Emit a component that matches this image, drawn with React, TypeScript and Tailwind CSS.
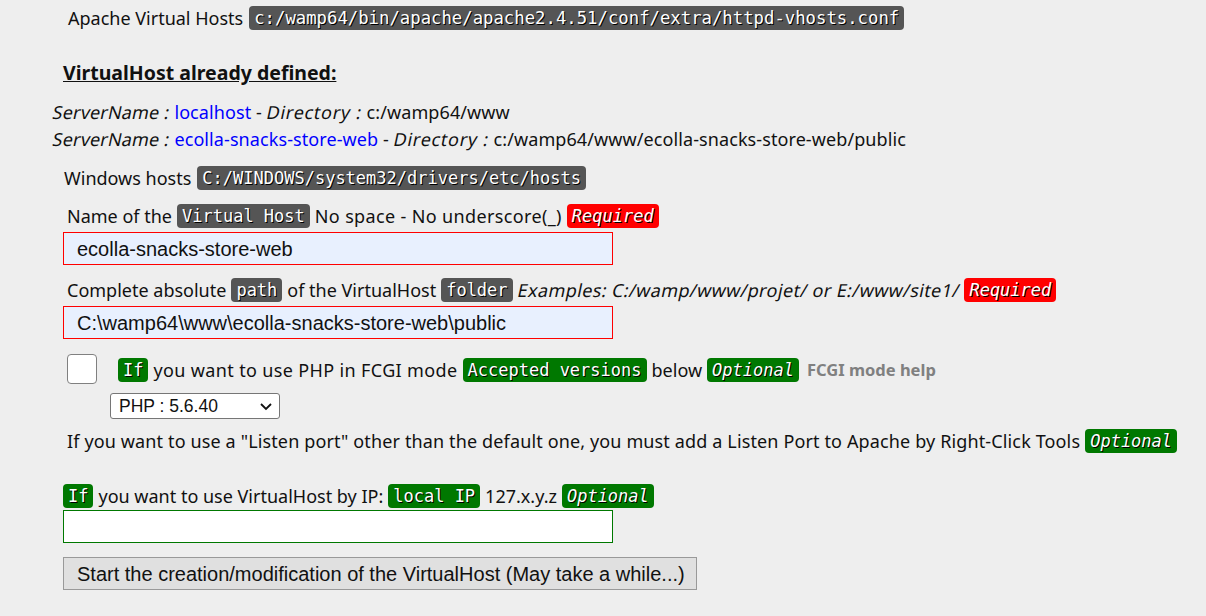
import React from "react";

const mono = '"DejaVu Sans Mono", monospace';

const Badge = ({
  children,
  color,
  italic = false,
  size = 17,
}: {
  children: React.ReactNode;
  color: "dark" | "green" | "red";
  italic?: boolean;
  size?: number;
}) => {
  const bg = color === "dark" ? "bg-[#555555]" : color === "green" ? "bg-[#007800]" : "bg-[#ff0000]";
  return (
    <code
      className={`inline-block rounded-[4px] ${bg} px-[5px] text-white leading-[24px] [text-shadow:1px_1px_0_#000] ${
        italic ? "italic" : ""
      }`}
      style={{ fontFamily: mono, fontSize: `${size}px` }}
    >
      {children}
    </code>
  );
};

const Obl = ({ children, className = "" }: { children: React.ReactNode; className?: string }) => (
  <span className={`inline-block -skew-x-12 ${className}`}>{children}</span>
);

const arial = '"Liberation Sans", Arial, sans-serif';

export default function App() {
  return (
    <div
      className="min-h-[616px] w-full bg-[#eeeeee] text-[#111111]"
      style={{ fontFamily: '"Noto Sans", "DejaVu Sans", sans-serif', fontSize: "18px" }}
    >
      <div className="pl-[68px] pt-[6px] flex items-center gap-[6px] h-[30px]">
        <span>Apache Virtual Hosts</span>
        <Badge color="dark" size={17.3}>
          c:/wamp64/bin/apache/apache2.4.51/conf/extra/httpd-vhosts.conf
        </Badge>
      </div>

      <div className="pl-[63px] mt-[28px] font-bold underline text-[19.5px]">VirtualHost already defined:</div>

      <div className="pl-[53px] mt-[12px] leading-[27px] tracking-[0.005em]">
        <div>
          <Obl className="tracking-[0.01em]">ServerName :</Obl> <span className="text-[#0000ff]">localhost</span> -{" "}
          <Obl className="tracking-[0.04em]">Directory :</Obl> c:/wamp64/www
        </div>
        <div>
          <Obl className="tracking-[0.01em]">ServerName :</Obl>{" "}
          <span className="text-[#0000ff]">ecolla-snacks-store-web</span> -{" "}
          <Obl className="tracking-[0.04em]">Directory :</Obl> c:/wamp64/www/ecolla-snacks-store-web/public
        </div>
      </div>

      <div className="pl-[64px] mt-[12px] flex items-center gap-[6px] h-[26px]">
        <span>Windows hosts</span>
        <Badge color="dark">C:/WINDOWS/system32/drivers/etc/hosts</Badge>
      </div>

      <div className="pl-[67px] mt-[12px] flex items-center gap-[5px] h-[26px]">
        <span>Name of the</span>
        <Badge color="dark">Virtual Host</Badge>
        <span className="tracking-[0.02em]">No space - No underscore(_)</span>
        <Badge color="red" italic>
          Required
        </Badge>
      </div>
      <div className="pl-[63px] mt-[3px]">
        <div
          className="w-[550px] h-[33px] border border-[#ff0000] bg-[#e8f0fe] flex items-center pl-[13px]"
          style={{ fontFamily: arial, fontSize: "20px" }}
        >
          ecolla-snacks-store-web
        </div>
      </div>

      <div className="pl-[67px] mt-[12px] flex items-center gap-[5px] h-[26px]">
        <span>Complete absolute</span>
        <Badge color="dark">path</Badge>
        <span>of the VirtualHost</span>
        <Badge color="dark">folder</Badge>
        <Obl className="tracking-[0.022em]">Examples: C:/wamp/www/projet/ or E:/www/site1/</Obl>
        <Badge color="red" italic>
          Required
        </Badge>
      </div>
      <div className="pl-[63px] mt-[3px]">
        <div
          className="w-[550px] h-[33px] border border-[#ff0000] bg-[#e8f0fe] flex items-center pl-[13px]"
          style={{ fontFamily: arial, fontSize: "20px" }}
        >
          C:\wamp64\www\ecolla-snacks-store-web\public
        </div>
      </div>

      <div className="pl-[67px] mt-[15px] flex items-start">
        <div className="w-[30px] h-[30px] rounded-[4px] border border-[#808080] bg-white shrink-0" />
        <div className="ml-[21px] flex items-center gap-[5px] h-[26px] mt-[3px]">
          <Badge color="green">If</Badge>
          <span className="tracking-[0.02em]">you want to use PHP in FCGI mode</span>
          <Badge color="green">Accepted versions</Badge>
          <span>below</span>
          <Badge color="green" italic>
            Optional
          </Badge>
          <span className="font-bold text-[#808080] text-[16.5px] ml-[3px]">FCGI mode help</span>
        </div>
      </div>
      <div className="pl-[110px] mt-[9px]">
        <div
          className="w-[170px] h-[26px] border border-[#767676] rounded-[3px] bg-white flex items-center justify-between pl-[8px] pr-[6px]"
          style={{ fontFamily: arial, fontSize: "17.5px" }}
        >
          <span>PHP : 5.6.40</span>
          <svg width="14" height="14" viewBox="0 0 14 14">
            <path d="M2 5 L7 10 L12 5" fill="none" stroke="#111" strokeWidth="1.8" />
          </svg>
        </div>
      </div>

      <div className="pl-[67px] mt-[9px] flex items-center gap-[5px] h-[26px]">
        <span className="tracking-[0.0075em]">
          If you want to use a "Listen port" other than the default one, you must add a Listen Port to Apache by
          Right-Click Tools
        </span>
        <Badge color="green" italic>
          Optional
        </Badge>
      </div>

      <div className="pl-[63px] mt-[29px] flex items-center gap-[5px] h-[26px]">
        <Badge color="green">If</Badge>
        <span>you want to use VirtualHost by IP:</span>
        <Badge color="green">local IP</Badge>
        <span>127.x.y.z</span>
        <Badge color="green" italic>
          Optional
        </Badge>
      </div>
      <div className="pl-[63px] mt-[1px]">
        <div className="w-[550px] h-[33px] border border-[#007800] bg-white" />
      </div>

      <div className="pl-[63px] mt-[14px]">
        <button
          className="h-[33px] w-[634px] border border-[#999999] bg-[#e0e0e0] text-[#111] pl-[13px] text-left"
          style={{ fontFamily: arial, fontSize: "20px" }}
        >
          Start the creation/modification of the VirtualHost (May take a while...)
        </button>
      </div>
    </div>
  );
}
